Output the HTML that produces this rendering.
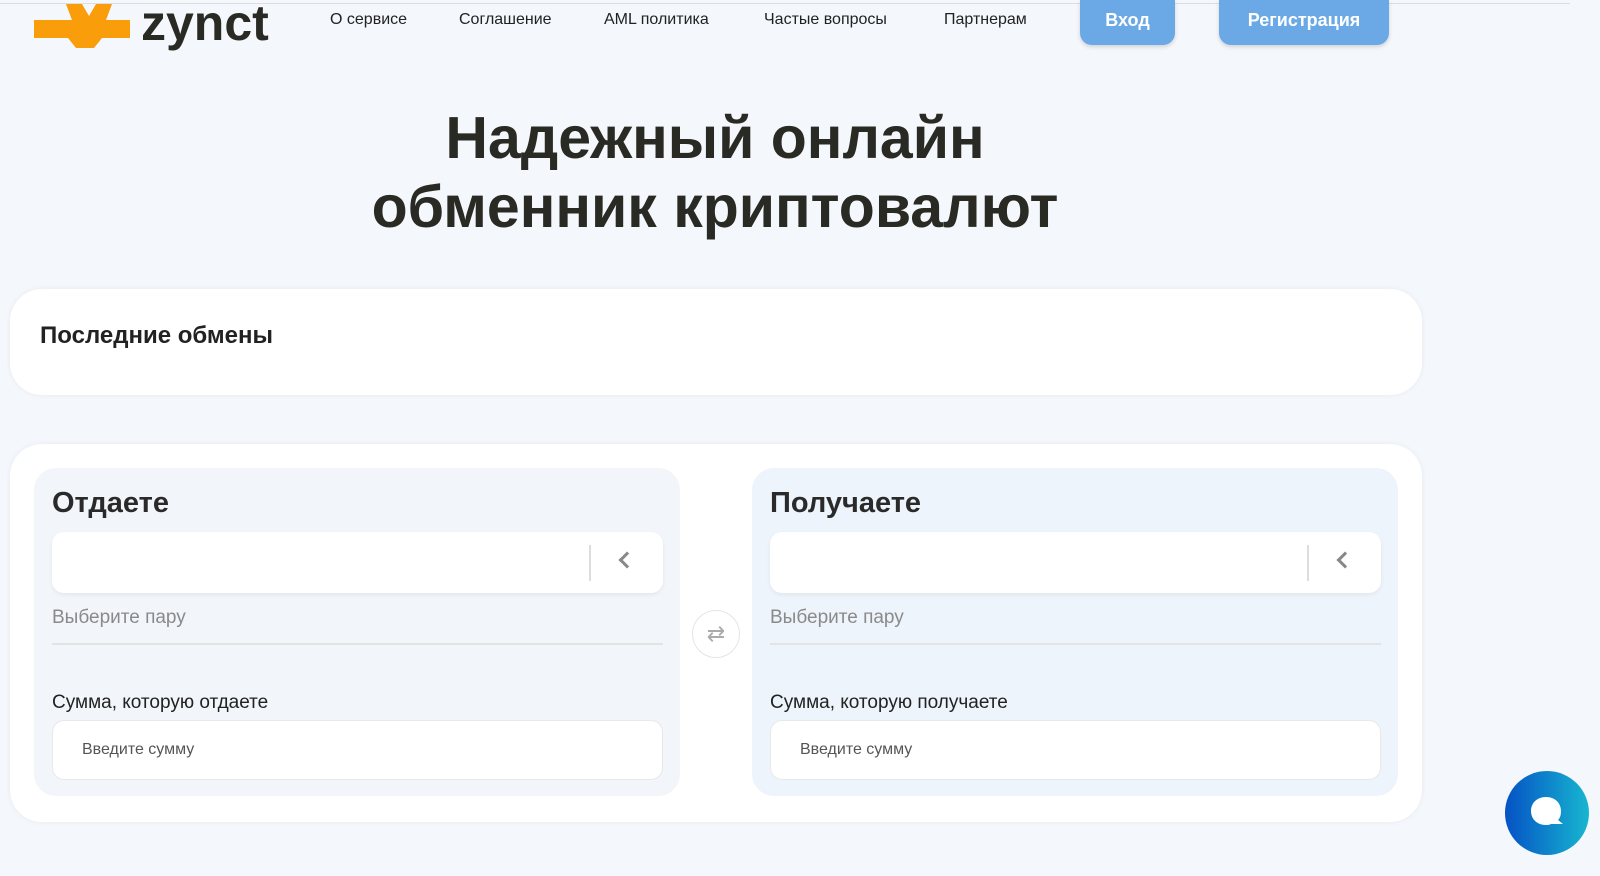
<!DOCTYPE html>
<html><head><meta charset="utf-8"><style>
*{box-sizing:border-box;margin:0;padding:0}
body{width:1600px;height:876px;overflow:hidden;background:#f4f7fb;font-family:"Liberation Sans",sans-serif;position:relative;color:#222}
.abs{position:absolute}
.topline{left:0;top:3px;width:1570px;height:1px;background:#ddd}
.nav a{position:absolute;top:11px;font-size:16px;color:#222;text-decoration:none}
.btn{position:absolute;top:0;height:45px;background:#6aa9e6;color:#fff;font-weight:bold;font-size:18px;border-radius:0 0 12px 12px;text-align:center;line-height:40px;box-shadow:0 2px 4px rgba(0,0,0,.15)}
h1{position:absolute;left:0;width:1430px;top:104px;text-align:center;font-size:59px;line-height:69px;color:#2a2a24;font-weight:bold}
.card{position:absolute;background:#fff;border-radius:32px;box-shadow:0 0 6px rgba(0,0,0,.06)}
.panel{position:absolute;top:468px;width:646px;height:328px;border-radius:22px;background:#f2f5fa}
.panel h2{position:absolute;left:18px;top:19px;font-size:29px;font-weight:bold;color:#2a2a2a}
.sel{position:absolute;left:18px;top:64px;width:611px;height:61px;background:#fff;border-radius:12px;box-shadow:0 2px 4px rgba(0,0,0,.06)}
.sel .bar{position:absolute;right:72px;top:13px;width:2px;height:36px;background:#ddd}
.sel .ch{position:absolute;right:30px;top:22px;width:12px;height:12px;border-left:3px solid #888;border-bottom:3px solid #888;transform:rotate(45deg)}
.pair{position:absolute;left:18px;top:139px;font-size:19px;color:#8a8a8a}
.line{position:absolute;left:18px;top:175px;width:611px;height:2px;background:#e3e3e3}
.lbl{position:absolute;left:18px;top:224px;font-size:19px;color:#222}
.inp{position:absolute;left:18px;top:252px;width:611px;height:60px;background:#fff;border-radius:12px;border:1px solid #e8e8e8;font-size:16px;color:#555;padding:20px 0 0 29px}
</style></head><body>
<div class="abs topline"></div>
<svg class="abs" style="left:32px;top:0" width="100" height="50"><path d="M2 20H40L34 4H50L57 16L64 4H80L74 20H98V38H70L62 48H44L36 38H2Z" fill="#f99d0a"/></svg>
<div class="abs" style="left:141px;top:-6px;font-size:50px;font-weight:bold;color:#2a2a24">zynct</div>
<div class="nav"><a style="left:330px">О сервисе</a><a style="left:459px">Соглашение</a><a style="left:604px">AML политика</a><a style="left:764px">Частые вопросы</a><a style="left:944px">Партнерам</a></div>
<div class="btn" style="left:1080px;width:95px">Вход</div>
<div class="btn" style="left:1219px;width:170px">Регистрация</div>
<h1>Надежный онлайн<br>обменник криптовалют</h1>
<div class="card" style="left:10px;top:289px;width:1412px;height:106px"><div class="abs" style="left:30px;top:33px;font-size:24px;font-weight:bold">Последние обмены</div></div>
<div class="card" style="left:10px;top:444px;width:1412px;height:378px"></div>
<div class="panel" style="left:34px"><h2>Отдаете</h2><div class="sel"><div class="bar"></div><div class="ch"></div></div><div class="pair">Выберите пару</div><div class="line"></div><div class="lbl">Сумма, которую отдаете</div><div class="inp">Введите сумму</div></div>
<div class="panel" style="left:752px;background:#eef4fb"><h2>Получаете</h2><div class="sel"><div class="bar"></div><div class="ch"></div></div><div class="pair">Выберите пару</div><div class="line"></div><div class="lbl">Сумма, которую получаете</div><div class="inp">Введите сумму</div></div>
<div class="abs" style="left:692px;top:610px;width:48px;height:48px;border-radius:50%;background:#fff;border:1px solid #e5e5e5;text-align:center;line-height:46px;color:#aaa;font-size:22px">⇄</div>
<div class="abs" style="left:1505px;top:771px;width:84px;height:84px;border-radius:50%;background:linear-gradient(90deg,#0552c5,#17b6d0)"></div>
<svg class="abs" style="left:1529px;top:795px" width="40" height="36"><path d="M17 2C26 2 32 8 32 16C32 20 31 23 29 25L34 29L22 29C20 30 19 30 17 30C8 30 2 24 2 16C2 8 8 2 17 2Z" fill="#fff"/></svg>
</body></html>
